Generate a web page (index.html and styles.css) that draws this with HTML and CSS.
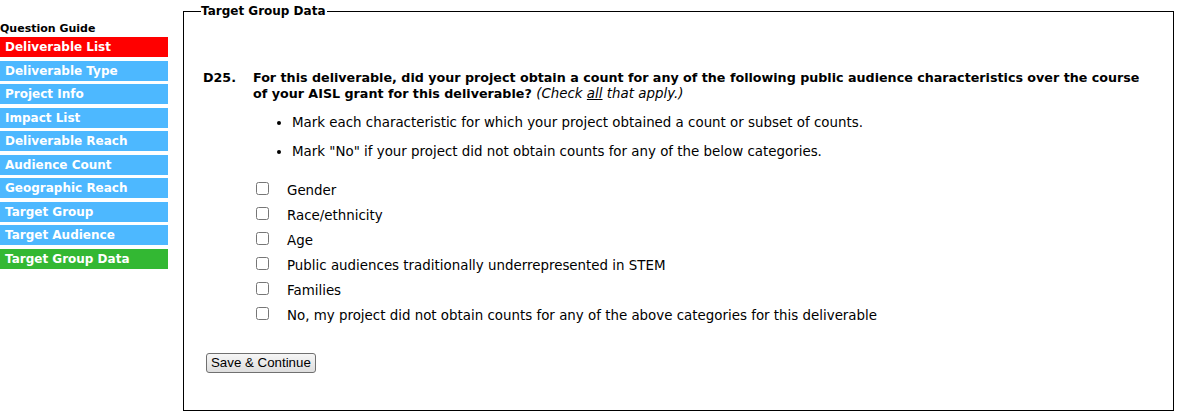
FILE: index.html
```html
<!DOCTYPE html>
<html lang="en">
<head>
    <meta charset="UTF-8">
    <title>Target Group Data</title>
    <link rel="stylesheet" href="styles.css">
</head>
<body>

    <!-- Question Guide -->
    <div class="guide">
        <div class="guide-title">Question Guide</div>
        <a class="guide-item current" href="#">Deliverable List</a>
        <a class="guide-item" href="#">Deliverable Type</a>
        <a class="guide-item" href="#">Project Info</a>
        <a class="guide-item" href="#">Impact List</a>
        <a class="guide-item" href="#">Deliverable Reach</a>
        <a class="guide-item" href="#">Audience Count</a>
        <a class="guide-item" href="#">Geographic Reach</a>
        <a class="guide-item" href="#">Target Group</a>
        <a class="guide-item" href="#">Target Audience</a>
        <a class="guide-item active" href="#">Target Group Data</a>
    </div>

    <!-- Main form -->
    <fieldset class="section">
        <legend>Target Group Data</legend>

        <div class="question">
            <div class="q-num">D25.</div>
            <div class="q-text">
                For this deliverable, did your project obtain a count for any of the following public audience characteristics over the course of your AISL grant for this deliverable?
                <span class="hint">(Check <u>all</u> that apply.)</span>
            </div>
        </div>

        <ul class="notes">
            <li>Mark each characteristic for which your project obtained a count or subset of counts.</li>
            <li>Mark "No" if your project did not obtain counts for any of the below categories.</li>
        </ul>

        <div class="choices">
            <label class="choice"><input type="checkbox"> <span>Gender</span></label>
            <label class="choice"><input type="checkbox"> <span>Race/ethnicity</span></label>
            <label class="choice"><input type="checkbox"> <span>Age</span></label>
            <label class="choice"><input type="checkbox"> <span>Public audiences traditionally underrepresented in STEM</span></label>
            <label class="choice"><input type="checkbox"> <span>Families</span></label>
            <label class="choice"><input type="checkbox"> <span>No, my project did not obtain counts for any of the above categories for this deliverable</span></label>
        </div>

        <button class="save" type="button">Save &amp; Continue</button>
    </fieldset>

</body>
</html>
```

FILE: styles.css
```css
/* Page */
body {
    margin: 0;
    padding: 0;
    font-family: "DejaVu Sans", Verdana, sans-serif;
    font-size: 13px;
    color: #000;
    background: #fff;
    display: flex;
    align-items: flex-start;
}

/* Question Guide sidebar */
.guide {
    width: 168px;
    padding-top: 22px;
    display: flex;
    flex-direction: column;
    gap: 3.5px;
    flex-shrink: 0;
}

.guide-title {
    font-size: 11px;
    font-weight: bold;
    line-height: 13px;
    margin-bottom: -1.5px;
}

.guide-item {
    display: block;
    height: 20px;
    line-height: 20px;
    padding-left: 5px;
    font-size: 12px;
    font-weight: bold;
    color: #fff;
    text-decoration: none;
    background-color: #4db8ff;
}

.guide-item.current {
    background-color: #ff0000;
}

.guide-item.active {
    background-color: #33b833;
}

/* Fieldset */
.section {
    margin: 3px 0 0 15px;
    width: 991px;
    height: 408px;
    box-sizing: border-box;
    border: 1px solid #000;
    padding: 0 20px 0 19px;
}

.section legend {
    font-weight: bold;
    font-size: 12px;
    line-height: 16px;
    padding: 0 1px 0 0;
    margin-left: -2px;
}

/* Question */
.question {
    display: flex;
    margin-top: 51px;
    font-weight: bold;
    line-height: 16px;
    font-size: 12.7px;
}

.q-num {
    width: 50px;
    flex-shrink: 0;
}

.q-text {
    width: 900px;
}

.hint {
    font-weight: normal;
    font-style: italic;
    font-size: 13.4px;
    line-height: 16px;
}

/* Notes */
.notes {
    margin: 13px 0 0 0;
    padding-left: 89px;
    font-size: 13.4px;
    line-height: 16px;
}

.notes li {
    margin-bottom: 13px;
}

/* Checkbox list */
.choices {
    display: flex;
    flex-direction: column;
    margin-top: 18px;
    padding-left: 53px;
    font-size: 13.4px;
}

.choice {
    display: flex;
    align-items: center;
    height: 25px;
}

.choice input {
    width: 13px;
    height: 13px;
    margin: 0 18px 0 0;
    position: relative;
    top: -2px;
}

/* Save button */
.save {
    margin: 25px 0 0 3px;
    font-family: "Liberation Sans", Arial, sans-serif;
    font-size: 13.3px;
    height: 20px;
    padding: 0 4px;
    line-height: 16px;
    background: linear-gradient(#f6f6f6, #dedede);
    border: 1px solid #707070;
    border-radius: 3px;
    color: #000;
}
```
